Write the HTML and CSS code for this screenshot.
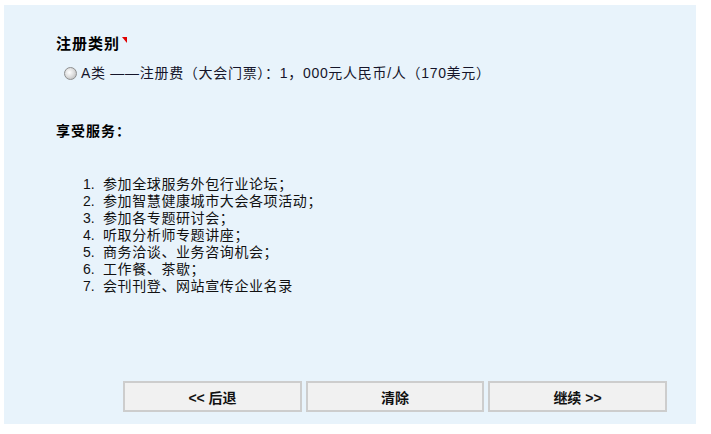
FILE: index.html
```html
<!DOCTYPE html>
<html lang="zh-CN">
<head>
<meta charset="utf-8">
<title>注册类别</title>
<link rel="stylesheet" href="styles.css">
</head>
<body>
<div class="panel">
  <div class="content">
    <h2 class="title">注册类别<span class="req"></span></h2>
    <label class="option"><input type="radio" name="cat" class="radio"><span>A类 ——注册费（大会门票）：1，000元人民币/人（170美元）</span></label>
    <h3 class="subtitle">享受服务：</h3>
    <ol class="services">
      <li>参加全球服务外包行业论坛；</li>
      <li>参加智慧健康城市大会各项活动；</li>
      <li>参加各专题研讨会；</li>
      <li>听取分析师专题讲座；</li>
      <li>商务洽谈、业务咨询机会；</li>
      <li>工作餐、茶歇；</li>
      <li>会刊刊登、网站宣传企业名录</li>
    </ol>
  </div>
  <div class="actions">
    <button class="btn btn-wide">&lt;&lt; 后退</button>
    <button class="btn">清除</button>
    <button class="btn btn-wide">继续 &gt;&gt;</button>
  </div>
</div>
</body>
</html>
```
FILE: styles.css
```css
html, body {
  margin: 0;
  padding: 0;
  background: #ffffff;
}
body {
  font-family: "Liberation Sans", "Noto Sans CJK SC", sans-serif;
  font-size: 14px;
  color: #111;
}
.panel {
  margin: 5px 15px 0 4px;
  height: 419px;
  box-sizing: border-box;
  background: #e8f3fb;
  padding: 29px 0 12px 52px;
  display: flex;
  flex-direction: column;
}
.content {
  display: flex;
  flex-direction: column;
  align-items: flex-start;
}
.title {
  margin: 0;
  font-size: 15px;
  font-weight: bold;
  line-height: 20px;
  letter-spacing: 1px;
  color: #000;
}
.req {
  display: inline-block;
  vertical-align: top;
  margin-top: 3px;
  margin-left: 2px;
  width: 0;
  height: 0;
  border-top: 6px solid #e00000;
  border-left: 5px solid transparent;
}
.option {
  margin-top: 9px;
  margin-left: 8px;
  display: flex;
  align-items: center;
  gap: 4px;
  line-height: 20px;
  letter-spacing: 0.7px;
  color: #15152a;
}
.radio {
  appearance: none;
  -webkit-appearance: none;
  margin: 0;
  width: 13px;
  height: 13px;
  border-radius: 50%;
  border: 1px solid #8e8e8e;
  box-sizing: border-box;
  background: radial-gradient(circle at 40% 40%, #ffffff 0%, #e0e0e0 45%, #b0b0b0 100%);
}
.subtitle {
  margin: 38px 0 0 0;
  font-size: 14px;
  font-weight: bold;
  line-height: 20px;
  letter-spacing: 1px;
  color: #000;
}
.services {
  margin: 35px 0 0 27px;
  padding: 0;
  list-style: none;
  counter-reset: item;
  line-height: 17px;
  letter-spacing: 0.6px;
}
.services li {
  counter-increment: item;
  display: flex;
}
.services li::before {
  content: counter(item) ".";
  width: 20px;
  flex: none;
  letter-spacing: 0;
}
.actions {
  margin-top: auto;
  margin-left: 67px;
  display: flex;
  gap: 4px;
}
.btn {
  width: 178px;
  height: 31px;
  box-sizing: border-box;
  border: 2px solid #cdcdcd;
  background: #f1f1f1;
  font-family: "Liberation Sans", "Noto Sans CJK SC", sans-serif;
  font-size: 14px;
  font-weight: bold;
  color: #111;
  padding: 0;
}
.btn-wide {
  width: 179px;
}
```
